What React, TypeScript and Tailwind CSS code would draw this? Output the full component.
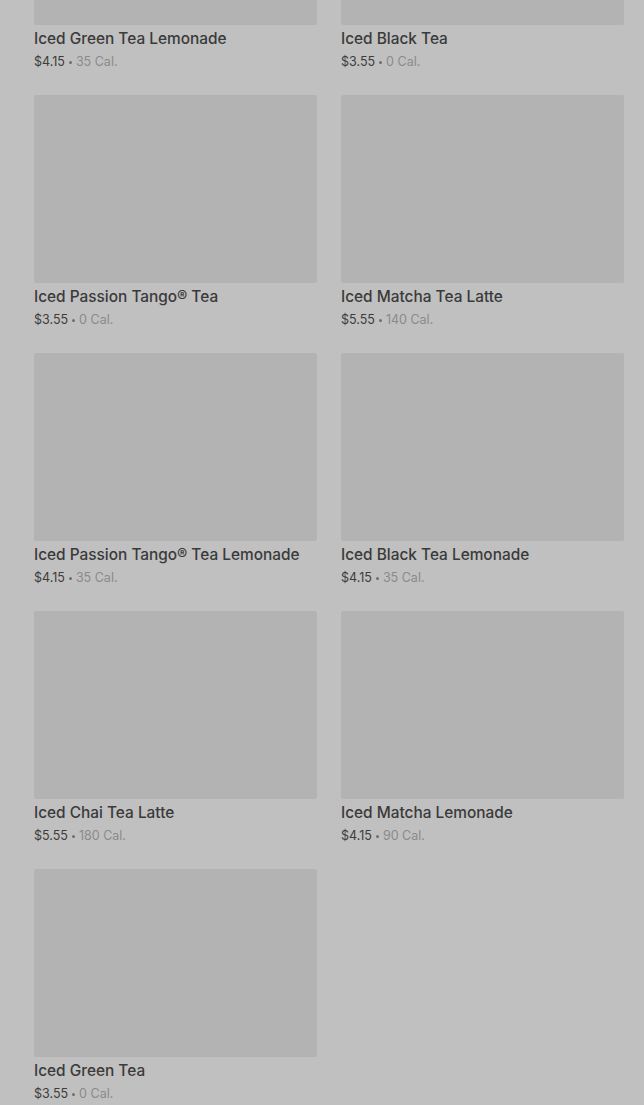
import React from "react";

const items = [
  { name: "Iced Green Tea Lemonade", price: "$4.15", cal: "35 Cal." },
  { name: "Iced Black Tea", price: "$3.55", cal: "0 Cal." },
  { name: "Iced Passion Tango® Tea", price: "$3.55", cal: "0 Cal." },
  { name: "Iced Matcha Tea Latte", price: "$5.55", cal: "140 Cal." },
  { name: "Iced Passion Tango® Tea Lemonade", price: "$4.15", cal: "35 Cal." },
  { name: "Iced Black Tea Lemonade", price: "$4.15", cal: "35 Cal." },
  { name: "Iced Chai Tea Latte", price: "$5.55", cal: "180 Cal." },
  { name: "Iced Matcha Lemonade", price: "$4.15", cal: "90 Cal." },
  { name: "Iced Green Tea", price: "$3.55", cal: "0 Cal." },
];

export default function App() {
  return (
    <div
      className="w-[644px] h-[1105px] overflow-hidden bg-[#c0c0c0]"
      style={{ fontFamily: "Inter, 'Noto Sans', sans-serif" }}
    >
      <div className="grid grid-cols-2 gap-x-6 gap-y-[23px] pl-[34px] pr-[20px] mt-[-163px]">
        {items.map((it) => (
          <div key={it.name} className="flex flex-col">
            <div className="h-[188px] bg-[#b3b3b3] rounded-[2px]" />
            <div className="mt-[2px] text-[15.4px] leading-6 font-medium text-[#3a3a3a]">
              {it.name}
            </div>
            <div className="mt-[1px] text-[12.5px] leading-5 text-[#3c3c3c] flex items-center">
              <span>{it.price}</span>
              <span className="inline-block w-[3px] h-[3px] rounded-full bg-[#6e6e6e] mx-[4px]" />
              <span className="text-[#8a8a8a]">{it.cal}</span>
            </div>
          </div>
        ))}
      </div>
    </div>
  );
}
